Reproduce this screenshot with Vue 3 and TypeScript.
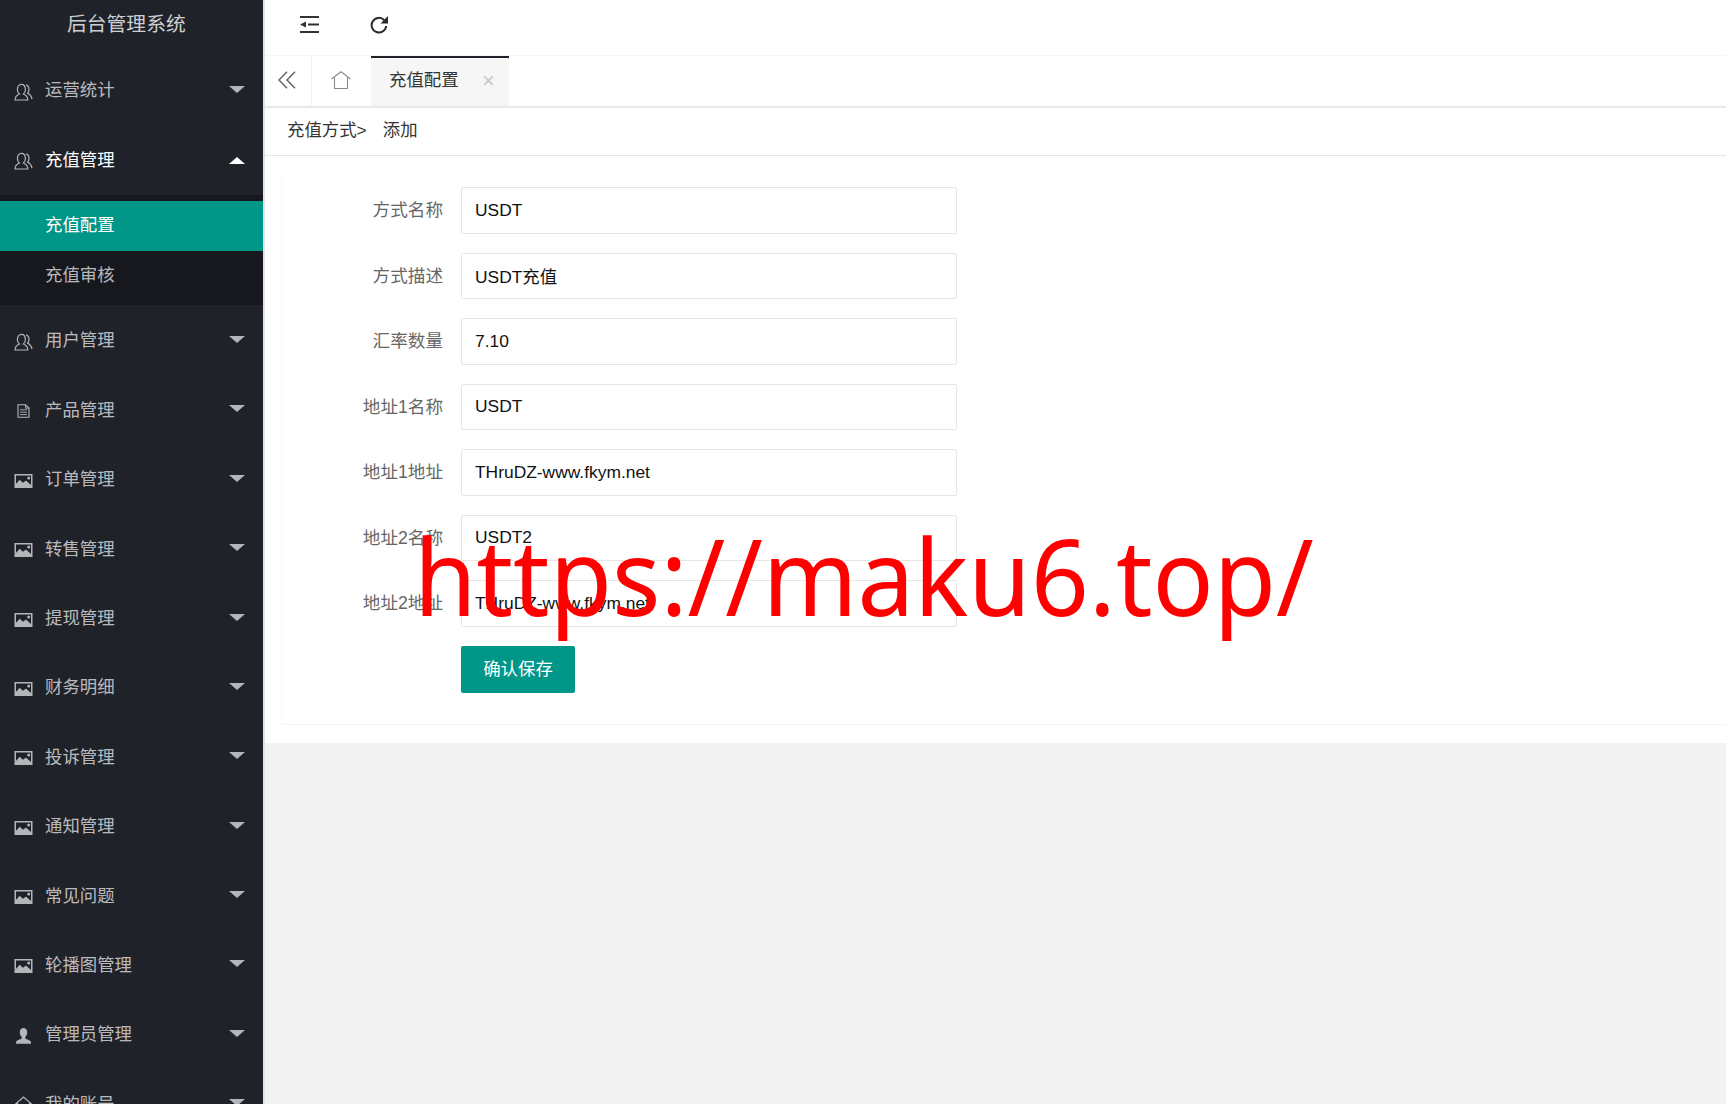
<script setup lang="ts">
interface MenuItem {
  label: string
  icon: 'users' | 'doc' | 'image' | 'person' | 'home'
  open?: boolean
  children?: { label: string; active?: boolean }[]
}

const menu: MenuItem[] = [
  { label: '运营统计', icon: 'users' },
  {
    label: '充值管理',
    icon: 'users',
    open: true,
    children: [{ label: '充值配置', active: true }, { label: '充值审核' }],
  },
  { label: '用户管理', icon: 'users' },
  { label: '产品管理', icon: 'doc' },
  { label: '订单管理', icon: 'image' },
  { label: '转售管理', icon: 'image' },
  { label: '提现管理', icon: 'image' },
  { label: '财务明细', icon: 'image' },
  { label: '投诉管理', icon: 'image' },
  { label: '通知管理', icon: 'image' },
  { label: '常见问题', icon: 'image' },
  { label: '轮播图管理', icon: 'image' },
  { label: '管理员管理', icon: 'person' },
  { label: '我的账号', icon: 'home' },
]

const fields = [
  { label: '方式名称', value: 'USDT' },
  { label: '方式描述', value: 'USDT充值' },
  { label: '汇率数量', value: '7.10' },
  { label: '地址1名称', value: 'USDT' },
  { label: '地址1地址', value: 'THruDZ-www.fkym.net' },
  { label: '地址2名称', value: 'USDT2' },
  { label: '地址2地址', value: 'THruDZ-www.fkym.net' },
]
</script>

<template>
  <div class="app">
    <aside class="sidebar">
      <div class="logo">后台管理系统</div>
      <nav>
        <template v-for="item in menu" :key="item.label">
          <div class="row" :class="{ open: item.open }">
            <span class="ico">
              <svg v-if="item.icon === 'users'" width="19" height="18" viewBox="0 0 19 18" fill="none" stroke="currentColor" stroke-width="1.2">
                <path d="M1 17c0-3.600 2.400-5.200 4.400-6 -1.300-1-2-2.500-2-4.300C3.400 3.500 5 1.400 7.400 1.400s4 2.100 4 5.300c0 1.800-.7 3.300-2 4.300 2 .8 4.400 2.400 4.400 6z" />
                <path d="M12 1.800c2 .5 3 2.400 3 4.600 0 1.500-.5 2.800-1.400 3.700 2 1 3.900 2.800 4.400 6.100" />
              </svg>
              <svg v-else-if="item.icon === 'doc'" width="19" height="14" viewBox="0 0 19 14" fill="none" stroke="currentColor" stroke-width="1.1">
                <path d="M4 .8h7.500l3.500 3.300v9.100H4z" />
                <path d="M6 5.800h7M6 8.200h7M6 10.600h7M11.500.8v3.400H15" stroke-width=".9" />
              </svg>
              <svg v-else-if="item.icon === 'image'" width="19" height="14" viewBox="0 0 19 14">
                <path fill="currentColor" fill-rule="evenodd" d="M.5 0h18v14H.5zM2 1.600v8.200l3.800-4 3.100 3 3.100-2.200 5 4.400V1.600z" />
                <circle cx="14.700" cy="4" r="1.500" fill="currentColor" />
              </svg>
              <svg v-else-if="item.icon === 'person'" width="19" height="16" viewBox="0 0 19 16">
                <path fill="currentColor" d="M9.500 0c2.400 0 3.700 1.700 3.700 4.200 0 2-.8 3.500-1.800 4.500v2c2 .7 4.600 1.600 5.600 3.100v2H2v-2c1-1.500 3.600-2.400 5.600-3.100v-2C6.600 7.700 5.800 6.200 5.800 4.200 5.800 1.700 7.100 0 9.500 0z" />
              </svg>
              <svg v-else width="19" height="18" viewBox="0 0 19 18" fill="none" stroke="currentColor" stroke-width="1.200">
                <path d="M1 8.500 9.500 1 18 8.500M3.500 7v9.500h12V7" />
              </svg>
            </span>
            <span class="row-label">{{ item.label }}</span>
            <span class="caret"></span>
          </div>
          <div v-if="item.children" class="sub">
            <div
              v-for="child in item.children"
              :key="child.label"
              class="sub-item"
              :class="{ active: child.active }"
            >
              {{ child.label }}
            </div>
          </div>
        </template>
      </nav>
    </aside>

    <main class="main">
      <header class="topbar">
        <svg width="19" height="17" viewBox="0 0 19 17" fill="#333">
          <path d="M0 0h19v2H0zM8 7.500h11v2H8zM0 15h19v2H0zM0 8.500 6 5.500v6z" />
        </svg>
        <svg class="tool-refresh" width="18" height="18" viewBox="0 0 18 18" fill="none">
          <path d="M14.300 4.200A7.300 7.300 0 1 0 16.200 10" stroke="#2b2b2b" stroke-width="2" />
          <path d="M18 0v7.500h-7.500z" fill="#2b2b2b" />
        </svg>
      </header>

      <div class="tabs">
        <div class="tab-btn back">
          <svg width="18" height="18" viewBox="0 0 18 18" fill="none" stroke="#666" stroke-width="1.500">
            <path d="M9 .8 1 9l8 8.200M17 .8 9 9l8 8.200" />
          </svg>
        </div>
        <div class="tab-btn home">
          <svg width="20" height="18" viewBox="0 0 20 18" fill="none" stroke="#8a8a8a" stroke-width="1.100">
            <path d="M.5 8 10 .7 19.500 8M3.500 6.500v11h13v-11" />
          </svg>
        </div>
        <div class="tab">
          <span>充值配置</span>
          <span class="close">×</span>
        </div>
      </div>

      <div class="crumbs"><span>充值方式&gt;</span><span>添加</span></div>

      <section class="content">
        <form class="card" @submit.prevent>
          <div v-for="field in fields" :key="field.label" class="form-row">
            <label class="form-label">{{ field.label }}</label>
            <input class="form-input" type="text" :value="field.value" />
          </div>
          <div class="form-row">
            <span class="form-label"></span>
            <button class="save" type="submit">确认保存</button>
          </div>
        </form>
      </section>
    </main>

    <div class="watermark">https://maku6.top/</div>
  </div>
</template>

<style>
html,
body {
  margin: 0;
  background: #f2f2f2;
}
</style>

<style scoped>
.app {
  position: relative;
  display: flex;
  height: 1104px;
  overflow: hidden;
  font-family: "Liberation Sans", "Noto Sans CJK SC", sans-serif;
  font-size: 17.4px;
  color: #333;
}

.sidebar {
  flex: 0 0 263px;
  height: 100%;
  overflow: hidden;
  background: #20222a;
  color: rgba(255, 255, 255, 0.7);
}

.logo {
  height: 55px;
  padding: 13px 0 0 67px;
  box-sizing: border-box;
  font-size: 19.8px;
  line-height: 22px;
  color: rgba(255, 255, 255, 0.8);
}

.row {
  display: flex;
  align-items: center;
  height: 69.4px;
  padding-left: 14px;
  padding-right: 18px;
  box-sizing: border-box;
}

.row.open {
  color: #fff;
}

.ico {
  display: flex;
  flex: 0 0 31px;
  color: #b4b5b8;
  padding-top: 4px;
}

.row-label {
  flex: 1;
  padding-bottom: 2px;
}

.caret {
  width: 0;
  height: 0;
  margin-top: -1px;
  border-left: 8px solid transparent;
  border-right: 8px solid transparent;
  border-top: 7px solid #b4b5b8;
}

.row.open .caret {
  margin-top: 2px;
  border-top: 0;
  border-bottom: 7px solid #fff;
}

.sub {
  margin-top: 1px;
  padding: 6px 0 4.5px;
  background: #17181e;
}

.sub-item {
  height: 50px;
  padding-left: 45px;
  line-height: 49px;
}

.sub-item.active {
  background: #009688;
  color: #fff;
}

.main {
  flex: 1;
  min-width: 0;
  border-left: 2px solid #e2e2e2;
  display: flex;
  flex-direction: column;
  background: #f2f2f2;
}

.topbar {
  display: flex;
  align-items: flex-start;
  flex: none;
  height: 39px;
  padding: 16px 0 0 35px;
  background: #fff;
  border-bottom: 1px solid #f6f6f6;
}

.tool-refresh {
  margin-left: 51px;
}

.tabs {
  display: flex;
  height: 50px;
  flex: none;
  background: #fff;
  border-bottom: 2px solid #e8e8e8;
}

.tab-btn {
  display: flex;
  align-items: center;
  justify-content: center;
  box-sizing: border-box;
  padding-bottom: 2px;
}

.back {
  width: 47px;
  border-right: 1px solid #f2f2f2;
  justify-content: flex-start;
  padding-left: 13px;
}

.home {
  width: 59px;
  padding-right: 1px;
}

.tab {
  position: relative;
  width: 138px;
  box-sizing: border-box;
  padding: 0 0 0 18px;
  line-height: 45px;
  background: #f6f6f6;
  border-top: 2px solid #20222a;
  color: #333;
}

.close {
  position: absolute;
  left: 111px;
  top: 0;
  font-size: 22px;
  color: #c8c8c8;
}

.crumbs {
  display: flex;
  gap: 16px;
  flex: none;
  height: 47px;
  padding-left: 22px;
  line-height: 44px;
  background: #fff;
  border-bottom: 1px solid #e6e6e6;
}

.content {
  flex: none;
  padding: 19px 0 18px 16px;
  background: #fff;
}

.card {
  padding: 12px 0 31px;
  background: #fff;
  border-left: 1px solid #f8f8f8;
  border-bottom: 1px solid #f4f4f4;
}

.form-row {
  display: flex;
  margin-bottom: 19px;
}

.form-row:last-child {
  margin-bottom: 0;
}

.form-label {
  flex: 0 0 179px;
  padding-right: 18px;
  box-sizing: border-box;
  text-align: right;
  font-size: 17.6px;
  line-height: 46px;
  color: #666;
}

.form-input {
  width: 496px;
  height: 46.5px;
  box-sizing: border-box;
  padding: 0 13px;
  border: 1px solid #e6e6e6;
  border-radius: 2px;
  outline: 0;
  background: #fff;
  font: inherit;
  color: #111;
}

.save {
  width: 114px;
  height: 47px;
  padding: 0 0 4px;
  border: 0;
  border-radius: 2px;
  background: #009688;
  color: #fff;
  font: inherit;
}

.watermark {
  position: absolute;
  left: 414px;
  top: 504px;
  font-family: "Noto Sans", sans-serif;
  font-size: 106px;
  line-height: 143px;
  white-space: nowrap;
  color: #ff0000;
  transform: scaleX(0.955);
  transform-origin: left center;
  pointer-events: none;
}
</style>
